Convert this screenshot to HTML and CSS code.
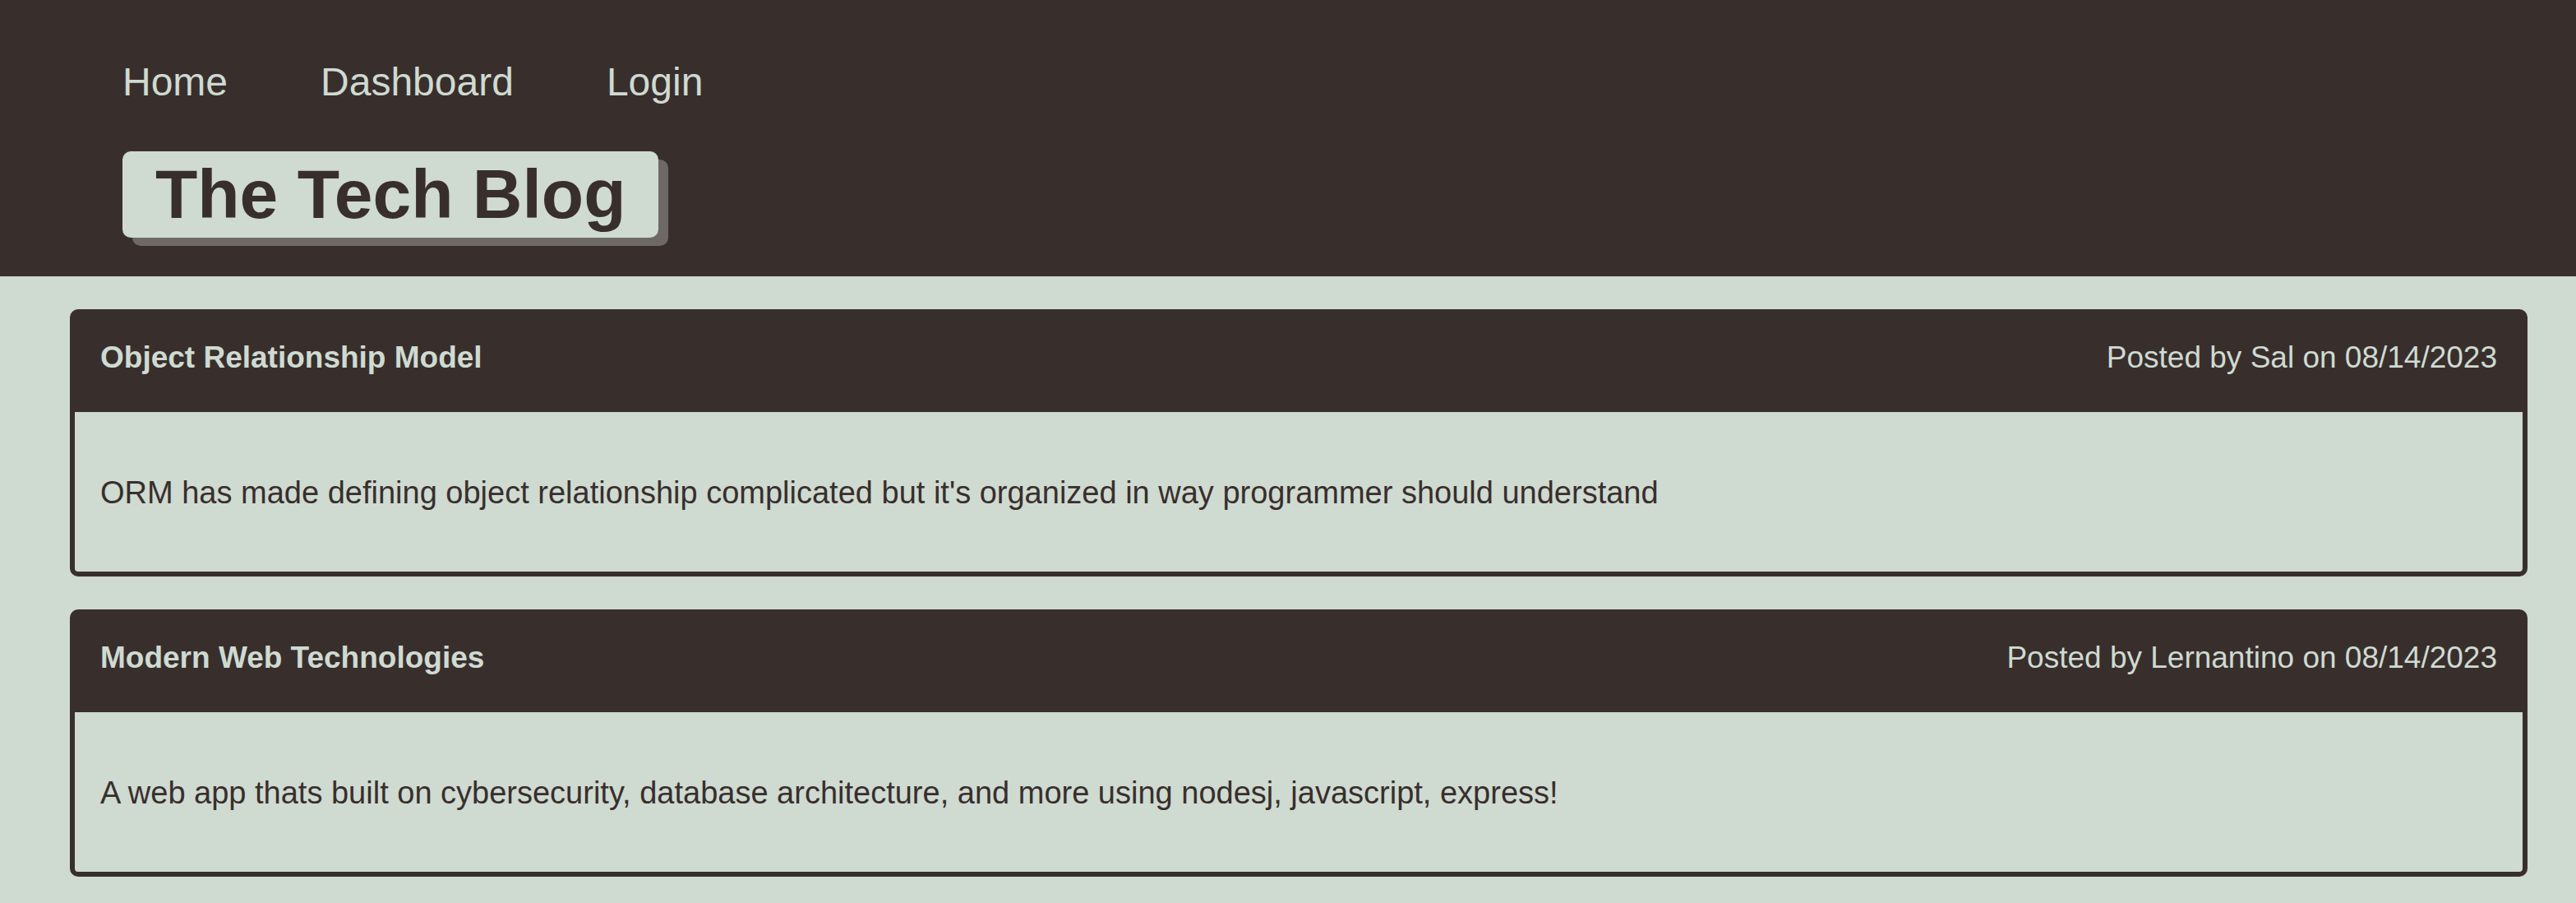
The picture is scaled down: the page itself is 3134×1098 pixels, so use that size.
FILE: index.html
```html
<!DOCTYPE html>
<html lang="en">
<head>
<meta charset="utf-8">
<title>The Tech Blog</title>
<link rel="stylesheet" href="styles.css">
</head>
<body>
<header class="site-header">
  <nav class="site-nav">
    <a href="/">Home</a>
    <a href="/dashboard">Dashboard</a>
    <a href="/login">Login</a>
  </nav>
  <h1 class="site-title">The Tech Blog</h1>
</header>
<main class="posts">
  <article class="post">
    <header class="post-header">
      <h2 class="post-title">Object Relationship Model</h2>
      <p class="post-meta">Posted by Sal on 08/14/2023</p>
    </header>
    <p class="post-body">ORM has made defining object relationship complicated but it's organized in way programmer should understand</p>
  </article>
  <article class="post">
    <header class="post-header">
      <h2 class="post-title">Modern Web Technologies</h2>
      <p class="post-meta">Posted by Lernantino on 08/14/2023</p>
    </header>
    <p class="post-body">A web app thats built on cybersecurity, database architecture, and more using nodesj, javascript, express!</p>
  </article>
</main>
</body>
</html>
```
FILE: styles.css
```css
:root {
  --dark: #382f2d;
  --light: #cfdad1;
}

* {
  box-sizing: border-box;
}

body {
  margin: 0;
  background: var(--light);
  color: var(--dark);
  font-family: "Liberation Sans", Arial, sans-serif;
  font-size: 38px;
  line-height: 44px;
}

.site-header {
  padding: 72px 149px 47px;
  background: var(--dark);
}

.site-nav {
  display: flex;
  gap: 113px;
  margin-bottom: 56px;
  font-size: 48px;
  line-height: 56px;
}

.site-nav a {
  color: var(--light);
  text-decoration: none;
}

.site-title {
  width: fit-content;
  margin: 0;
  padding: 0 40px;
  border-radius: 10px;
  background: var(--light);
  box-shadow: 12px 10px #6e6966;
  font-size: 84px;
  line-height: 105px;
}

.posts {
  display: grid;
  gap: 40px;
  padding: 40px 59px 32px 85px;
}

.post {
  border: 6px solid var(--dark);
  border-radius: 10px;
}

.post-header {
  display: flex;
  justify-content: space-between;
  padding: 31px 31px 44px;
  background: var(--dark);
  color: var(--light);
}

.post-title,
.post-meta {
  margin: 0;
  font-size: 37px;
}

.post-body {
  margin: 0;
  padding: 76px 31px 74px;
}
```
